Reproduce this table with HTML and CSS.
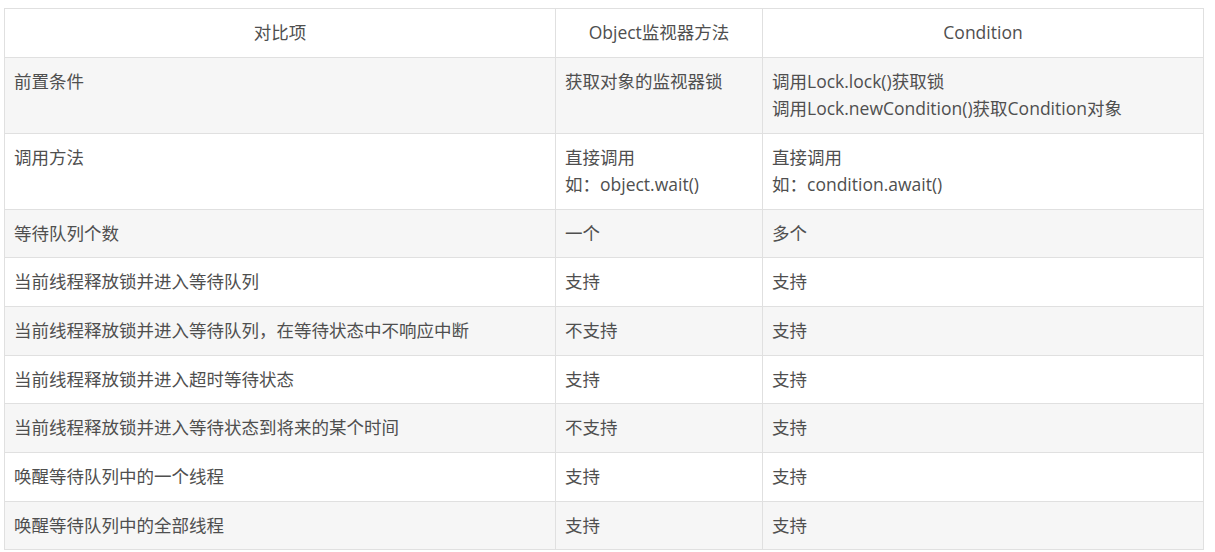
FILE: index.html
```html
<!DOCTYPE html>
<html lang="zh-CN">
<head>
<meta charset="utf-8">
<title>Object监视器方法与Condition对比</title>
<link rel="stylesheet" href="styles.css">
</head>
<body>
<table class="cmp">
  <colgroup>
    <col class="c1"><col class="c2"><col class="c3">
  </colgroup>
  <thead>
    <tr><th>对比项</th><th>Object监视器方法</th><th>Condition</th></tr>
  </thead>
  <tbody>
    <tr><td>前置条件</td><td>获取对象的监视器锁</td><td>调用Lock.lock()获取锁<br>调用Lock.newCondition()获取Condition对象</td></tr>
    <tr><td>调用方法</td><td>直接调用<br>如：object.wait()</td><td>直接调用<br>如：condition.await()</td></tr>
    <tr><td>等待队列个数</td><td>一个</td><td>多个</td></tr>
    <tr><td>当前线程释放锁并进入等待队列</td><td>支持</td><td>支持</td></tr>
    <tr><td>当前线程释放锁并进入等待队列，在等待状态中不响应中断</td><td>不支持</td><td>支持</td></tr>
    <tr><td>当前线程释放锁并进入超时等待状态</td><td>支持</td><td>支持</td></tr>
    <tr><td>当前线程释放锁并进入等待状态到将来的某个时间</td><td>不支持</td><td>支持</td></tr>
    <tr><td>唤醒等待队列中的一个线程</td><td>支持</td><td>支持</td></tr>
    <tr><td>唤醒等待队列中的全部线程</td><td>支持</td><td>支持</td></tr>
  </tbody>
</table>
</body>
</html>
```
FILE: styles.css
```css
html, body {
  margin: 0;
  background: #ffffff;
}
body {
  padding: 8px 0 0 4px;
  font-family: "Open Sans", "Noto Sans CJK SC", sans-serif;
  font-size: 17.5px;
  color: #4f4f4f;
}
.cmp {
  border-collapse: collapse;
  table-layout: fixed;
  width: 1199px;
}
.c1 { width: 551px; }
.c2 { width: 207px; }
.c3 { width: 441px; }
.cmp th, .cmp td {
  border: 1px solid #e0e0e0;
  padding: 10.2px 9px;
  line-height: 27.3px;
  text-align: left;
  vertical-align: top;
  font-weight: normal;
}
.cmp th {
  text-align: center;
  background: #ffffff;
}
.cmp tbody tr:nth-child(odd) td {
  background: #f6f6f6;
}
.cmp tbody tr:nth-child(even) td {
  background: #ffffff;
}
```
